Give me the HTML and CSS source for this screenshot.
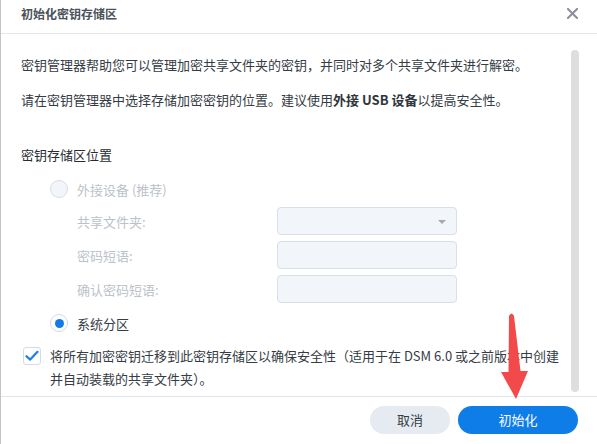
FILE: index.html
```html
<!DOCTYPE html>
<html lang="zh-CN">
<head>
<meta charset="utf-8">
<link rel="stylesheet" href="styles.css">
</head>
<body>
<div class="dialog">
  <div class="header">
    <span class="title">初始化密钥存储区</span>
    <svg class="close" width="11" height="11" viewBox="0 0 11 11"><path d="M1 1L10 10M10 1L1 10" stroke="#8a9096" stroke-width="2" stroke-linecap="square"/></svg>
  </div>
  <div class="body">
    <p class="para">密钥管理器帮助您可以管理加密共享文件夹的密钥，并同时对多个共享文件夹进行解密。</p>
    <p class="para second">请在密钥管理器中选择存储加密密钥的位置。建议使用<b>外接 USB 设备</b>以提高安全性。</p>
    <div class="section-title">密钥存储区位置</div>
    <div class="opt radio-row disabled">
      <span class="radio"></span>
      <span>外接设备 (推荐)</span>
    </div>
    <div class="field">
      <span class="label">共享文件夹:</span>
      <span class="input select"><span class="caret"></span></span>
    </div>
    <div class="field">
      <span class="label">密码短语:</span>
      <span class="input"></span>
    </div>
    <div class="field">
      <span class="label">确认密码短语:</span>
      <span class="input"></span>
    </div>
    <div class="opt radio-row">
      <span class="radio checked"></span>
      <span>系统分区</span>
    </div>
    <div class="check-row">
      <span class="checkbox"><svg width="14" height="12" viewBox="0 0 14 12"><path d="M1.5 6.2L5.2 9.6L12.5 1.8" fill="none" stroke="#1a7fe6" stroke-width="2.2" stroke-linecap="round" stroke-linejoin="round"/></svg></span>
      <span class="check-text">将所有加密密钥迁移到此密钥存储区以确保安全性（适用于在 DSM 6.0 或之前版本中创建<br>并自动装载的共享文件夹）。</span>
    </div>
    <div class="scrollbar"></div>
  </div>
  <div class="footer">
    <button class="btn btn-cancel">取消</button>
    <button class="btn btn-primary">初始化</button>
  </div>
  <svg class="arrow" width="40" height="100" viewBox="495 305 40 100">
    <path d="M508 316 Q510.5 311 513 316 L519.5 371 L527 371 L515 399 L500 372 L507.5 372 Z" fill="#f24a4a"/>
  </svg>
</div>
</body>
</html>
```

FILE: styles.css
```css
* { box-sizing: border-box; }
html, body { margin: 0; padding: 0; background: #fff; }
body {
  font-family: "Noto Sans CJK SC", "Noto Sans", sans-serif;
  font-size: 13px;
  color: #353c44;
}
.dialog {
  position: relative;
  width: 597px;
  height: 444px;
  display: flex;
  flex-direction: column;
  border-left: 1px solid #c4c4c4;
  overflow: hidden;
}
.header {
  height: 34px;
  flex: none;
  display: flex;
  align-items: center;
  justify-content: space-between;
  padding: 0 19px 0 20px;
  border-bottom: 1px solid #e4e6e8;
}
.title {
  font-size: 12px;
  font-weight: bold;
  color: #4a525a;
  line-height: 20px;
  margin-top: -5px;
}
.close { margin-top: -6px; }
.body {
  position: relative;
  flex: 1;
  padding: 21px 0 0 20px;
}
.para {
  margin: 0;
  line-height: 20px;
}
.para.second { margin-top: 15px; }
.para b { font-weight: bold; color: #2e353c; }
.section-title {
  margin-top: 35px;
  line-height: 20px;
  color: #262c32;
}
.opt {
  display: flex;
  align-items: center;
  gap: 9px;
  height: 28px;
  padding-left: 29px;
}
.radio-row.disabled { margin-top: 10px; margin-bottom: 4px; color: #bcc2c8; }
.radio {
  width: 18px;
  height: 18px;
  border-radius: 50%;
  border: 1px solid #d8dee6;
  background: #f2f5f9;
  display: flex;
  align-items: center;
  justify-content: center;
}
.radio.checked { background: #fff; border-color: #d3dbe4; }
.radio.checked::after {
  content: "";
  width: 9px;
  height: 9px;
  border-radius: 50%;
  background: #0f7de8;
}
.field {
  display: flex;
  align-items: center;
  height: 28px;
  margin-bottom: 6px;
  padding-left: 56px;
  color: #bcc2c8;
}
.label { width: 200px; }
.input {
  position: relative;
  width: 180px;
  height: 28px;
  border: 1px solid #d7dfe8;
  border-radius: 4px;
  background: #f2f5f9;
}
.caret {
  position: absolute;
  right: 10px;
  top: 12px;
  width: 0;
  height: 0;
  border-left: 4px solid transparent;
  border-right: 4px solid transparent;
  border-top: 4px solid #a4aab0;
}
.check-row {
  display: flex;
  align-items: flex-start;
  gap: 9px;
  margin-top: 7px;
  padding-left: 2px;
}
.checkbox {
  flex: none;
  width: 18px;
  height: 18px;
  margin-top: 3px;
  border: 1px solid #d3dbe4;
  border-radius: 3px;
  display: flex;
  align-items: center;
  justify-content: center;
}
.check-text { line-height: 23px; white-space: nowrap; }
.scrollbar {
  position: absolute;
  left: 570px;
  top: 16px;
  width: 8px;
  height: 342px;
  border-radius: 4px;
  background: #dedede;
}
.footer {
  flex: none;
  height: 48px;
  border-top: 1px solid #dfe5ec;
  display: flex;
  align-items: center;
  justify-content: flex-end;
  gap: 8px;
  padding: 0 19px 2px 0;
}
.btn {
  height: 28px;
  border: none;
  border-radius: 14px;
  font-family: inherit;
  font-size: 13px;
  padding: 0;
}
.btn-cancel { width: 80px; background: #e6ebf1; color: #353c44; }
.btn-primary { width: 120px; background: #0f7de8; color: #fff; }
.arrow { position: absolute; left: 495px; top: 305px; }
```
